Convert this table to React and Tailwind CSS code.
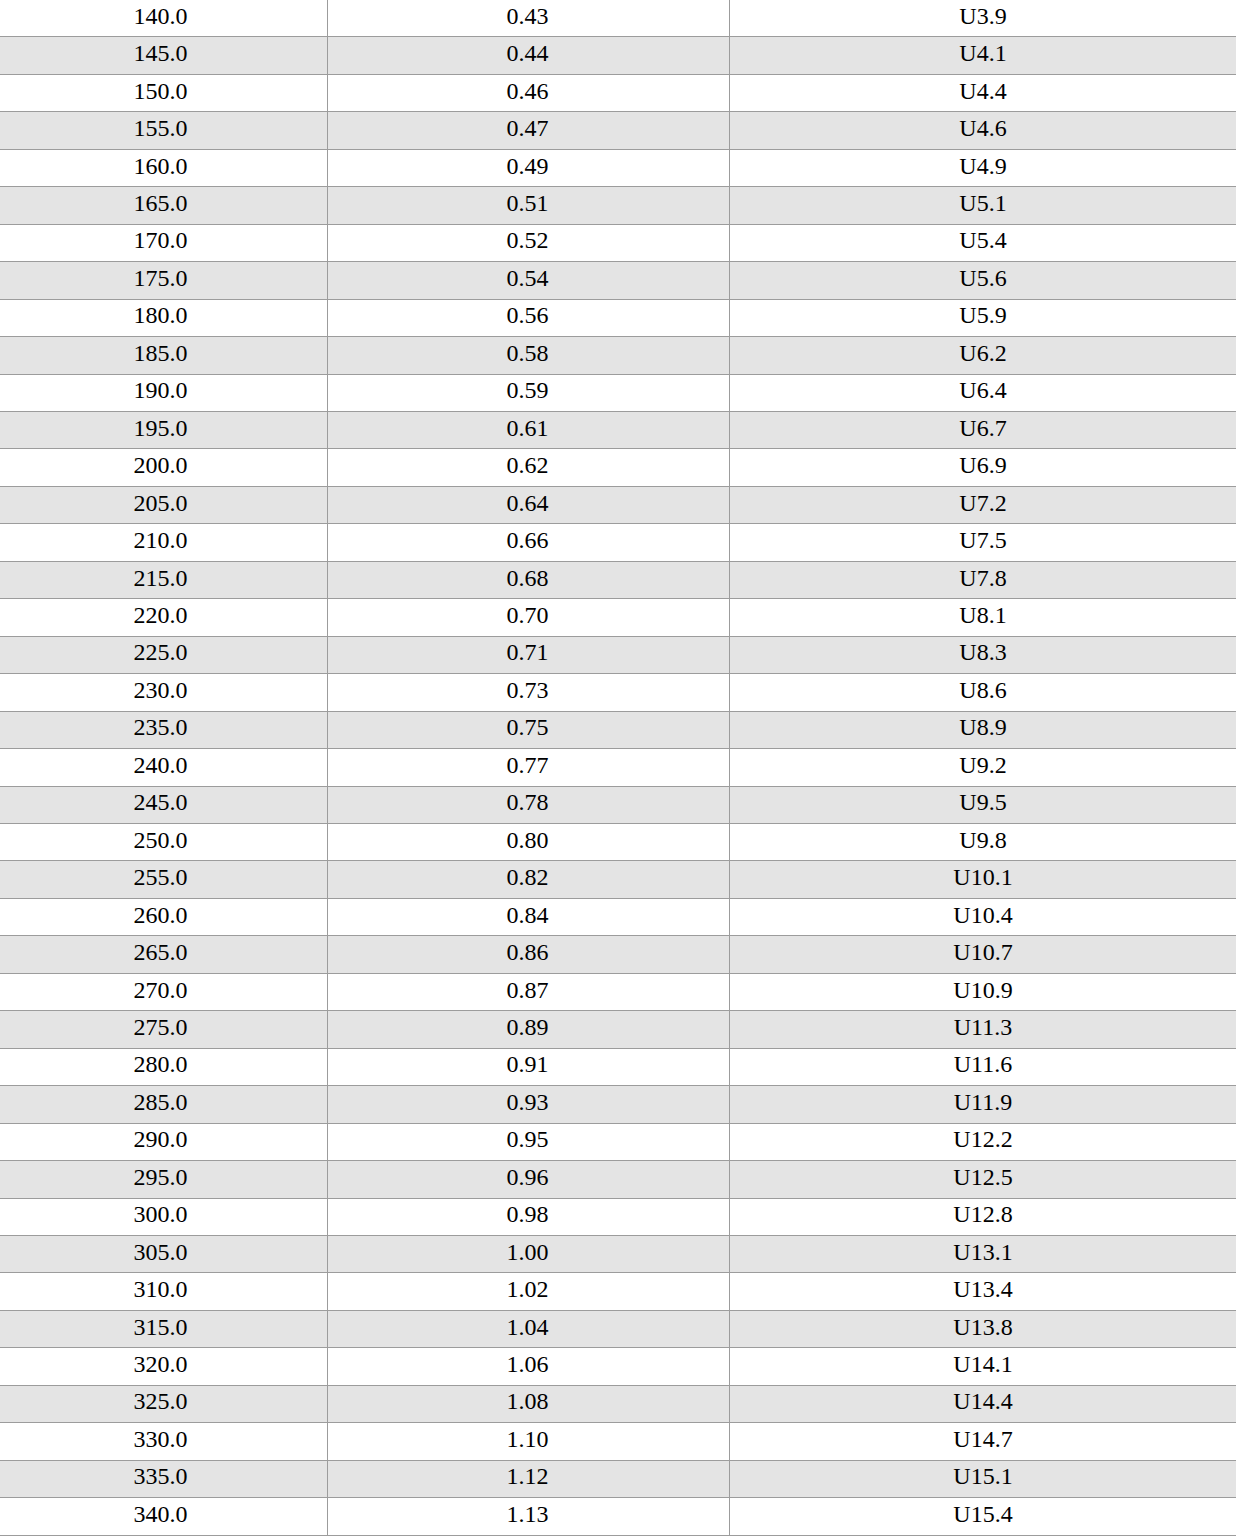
const col2 = [
  '0.43', '0.44', '0.46', '0.47', '0.49', '0.51', '0.52', '0.54', '0.56', '0.58',
  '0.59', '0.61', '0.62', '0.64', '0.66', '0.68', '0.70', '0.71', '0.73', '0.75',
  '0.77', '0.78', '0.80', '0.82', '0.84', '0.86', '0.87', '0.89', '0.91', '0.93',
  '0.95', '0.96', '0.98', '1.00', '1.02', '1.04', '1.06', '1.08', '1.10', '1.12',
  '1.13',
];

const col3 = [
  'U3.9', 'U4.1', 'U4.4', 'U4.6', 'U4.9', 'U5.1', 'U5.4', 'U5.6', 'U5.9', 'U6.2',
  'U6.4', 'U6.7', 'U6.9', 'U7.2', 'U7.5', 'U7.8', 'U8.1', 'U8.3', 'U8.6', 'U8.9',
  'U9.2', 'U9.5', 'U9.8', 'U10.1', 'U10.4', 'U10.7', 'U10.9', 'U11.3', 'U11.6', 'U11.9',
  'U12.2', 'U12.5', 'U12.8', 'U13.1', 'U13.4', 'U13.8', 'U14.1', 'U14.4', 'U14.7', 'U15.1',
  'U15.4',
];

const rows = col2.map((v, i) => ({
  size: (140 + i * 5).toFixed(1),
  ratio: v,
  grade: col3[i],
}));

function Row({ row, striped }) {
  return (
    <div
      className={`grid grid-cols-[327px_402px_1fr] h-[37.46px] border-b border-[#9c9c9c] ${
        striped ? 'bg-[#e4e4e4]' : 'bg-white'
      }`}
    >
      <div className="flex items-center justify-center pr-[6px] pb-[5px]">{row.size}</div>
      <div className="flex items-center justify-center pr-[2px] pb-[5px] border-l border-[#9c9c9c]">{row.ratio}</div>
      <div className="flex items-center justify-center pb-[5px] border-l border-[#9c9c9c]">{row.grade}</div>
    </div>
  );
}

export default function App() {
  return (
    <div className="w-[1236px] bg-white text-black text-[24px] leading-none font-['Liberation_Serif','Times_New_Roman',serif]">
      {rows.map((row, i) => (
        <Row key={row.size} row={row} striped={i % 2 === 1} />
      ))}
    </div>
  );
}
